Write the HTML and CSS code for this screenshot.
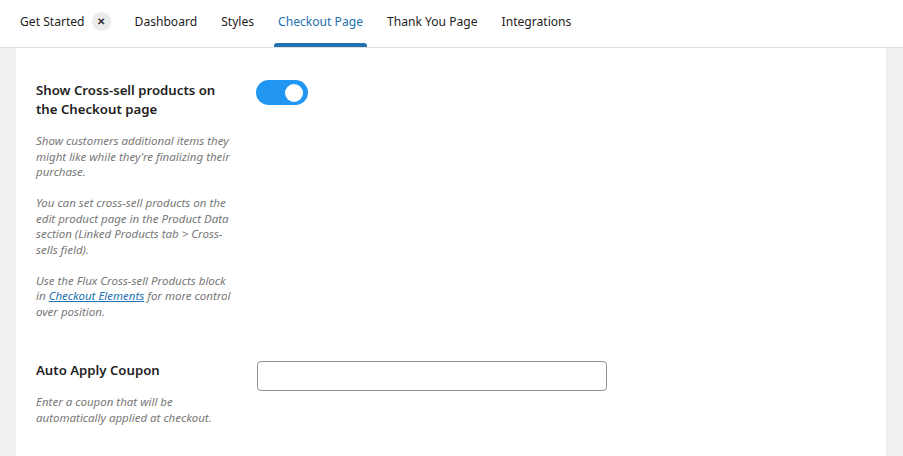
FILE: index.html
```html
<!DOCTYPE html>
<html lang="en">
<head>
<meta charset="utf-8">
<title>Checkout Page</title>
<link rel="stylesheet" href="styles.css">
</head>
<body>
<header class="tabs">
  <nav class="tab-list">
    <a class="tab tab-started" href="#">Get Started <span class="close">&#x2715;</span></a>
    <a class="tab" href="#">Dashboard</a>
    <a class="tab" href="#">Styles</a>
    <a class="tab active" href="#">Checkout Page</a>
    <a class="tab" href="#">Thank You Page</a>
    <a class="tab" href="#">Integrations</a>
  </nav>
</header>
<main class="page">
  <section class="card">
    <div class="row">
      <div class="label-col">
        <h3 class="label">Show Cross-sell products on the Checkout page</h3>
        <div class="desc">
          <p>Show customers additional items they might like while they're finalizing their purchase.</p>
          <p>You can set cross-sell products on the edit product page in the Product Data section (Linked Products tab &gt; Cross-sells field).</p>
          <p>Use the Flux Cross-sell Products block in <a href="#">Checkout Elements</a> for more control over position.</p>
        </div>
      </div>
      <div class="control">
        <span class="toggle"><span class="knob"></span></span>
      </div>
    </div>
    <div class="row row-coupon">
      <div class="label-col">
        <h3 class="label">Auto Apply Coupon</h3>
        <div class="desc">
          <p>Enter a coupon that will be automatically applied at checkout.</p>
        </div>
      </div>
      <div class="control">
        <input class="text-input" type="text">
      </div>
    </div>
  </section>
</main>
</body>
</html>
```
FILE: styles.css
```css
* { box-sizing: border-box; }
html, body { margin: 0; padding: 0; }
body {
  background: #f0f0f1;
  font-family: "Noto Sans", "Open Sans", sans-serif;
  color: #1e1e1e;
  height: 456px;
  overflow: hidden;
}
.tabs {
  background: #fff;
  border-bottom: 1px solid #e0e0e0;
  height: 48px;
  padding-left: 16px;
}
.tab-list {
  display: flex;
  gap: 16px;
  height: 47px;
}
.tab {
  display: flex;
  align-items: center;
  padding: 0 4px 5px;
  font-size: 12.1px;
  color: #1e1e1e;
  text-decoration: none;
  position: relative;
}
.tab.active { color: #2271b1; }
.tab.active::after {
  content: "";
  position: absolute;
  left: 0; right: 0; bottom: 0;
  height: 4px;
  background: #2271b1;
  border-radius: 3px 3px 0 0;
}
.close {
  display: inline-flex;
  align-items: center;
  justify-content: center;
  width: 19px;
  height: 19px;
  margin-left: 7px;
  border-radius: 50%;
  background: #ebebeb;
  font-size: 10px;
  font-weight: 700;
  color: #2b2b3a;
}
.page {
  display: flex;
  padding: 0 17px 0 16px;
}
.card {
  flex: 1;
  background: #fff;
  padding: 33px 20px 40px;
  min-height: 420px;
}
.row {
  display: flex;
  gap: 20px;
  align-items: flex-start;
}
.row-coupon { margin-top: 42px; }
.label-col { width: 200px; }
.label {
  margin: 0;
  font-size: 13.2px;
  font-weight: 600;
  line-height: 19px;
  color: #1e1e1e;
}
.desc {
  margin-top: 14px;
  font-size: 11.5px;
  font-style: italic;
  line-height: 15.5px;
  color: #787878;
}
.desc p { margin: 0 0 15.5px; }
.desc p:last-child { margin-bottom: 0; }
.desc a { color: #2271b1; }
.toggle {
  display: flex;
  align-items: center;
  justify-content: flex-end;
  width: 52px;
  height: 25px;
  margin-top: -1px;
  border-radius: 13px;
  background: #2196f3;
  padding-right: 5px;
}
.knob {
  width: 18px;
  height: 18px;
  border-radius: 50%;
  background: #fff;
}
.text-input {
  display: block;
  width: 350px;
  height: 30px;
  border: 1px solid #8c8f94;
  border-radius: 4px;
  background: #fff;
  margin: 0 0 0 1px;
}
```
